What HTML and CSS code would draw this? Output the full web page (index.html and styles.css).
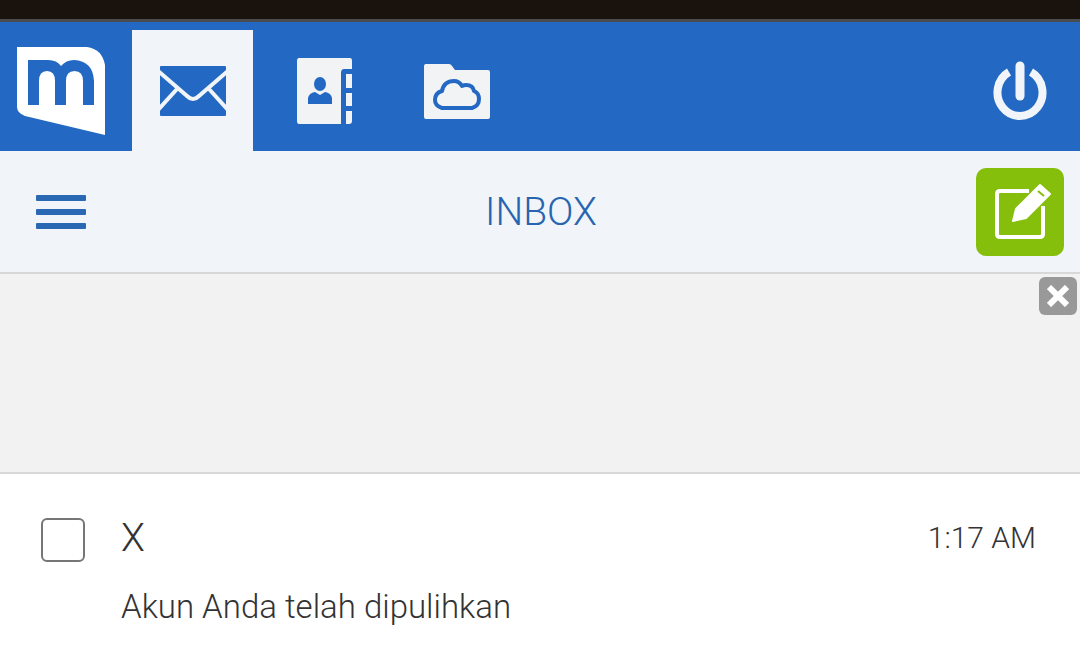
FILE: index.html
```html
<!DOCTYPE html>
<html lang="id">
<head>
<meta charset="utf-8">
<meta name="viewport" content="width=device-width, initial-scale=1">
<title>Inbox</title>
<link rel="stylesheet" href="styles.css">
</head>
<body>
<div class="system-bar"></div>
<header class="app-header">
  <a class="logo" href="#" aria-label="Home">
    <svg width="88" height="88" viewBox="0 0 88 88" aria-hidden="true">
      <path fill="#fff" d="M0 0H70Q85 2 88 18V88L8 69Q0 66 0 60Z"/>
      <path fill="#2369c3" d="M11 13H31Q40 13 44 19Q49 13 57 13Q76 14 77 34V58H66V34Q66 24 57.500 24Q49 24 49 34V58H38V34Q38 24 30 24Q22 24 22 34V58H11Z"/>
    </svg>
  </a>
  <nav class="tabs" aria-label="Sections">
    <a class="tab tab-active" href="#" aria-label="Mail" aria-current="page">
      <svg width="66" height="66" viewBox="0 0 66 66" aria-hidden="true">
        <rect y="8" width="66" height="50" rx="1" fill="#2369c3"/>
        <path d="M-2 13L27 38Q33 44 39 38L68 13M17 31L-2 52M49 31L68 52" fill="none" stroke="#f1f5fa" stroke-width="4"/>
      </svg>
    </a>
    <a class="tab" href="#" aria-label="Contacts">
      <svg width="66" height="66" viewBox="0 0 66 66" aria-hidden="true">
        <path fill="#f2f3f5" d="M7 0H58Q60 0 60 3V11H52Q49 11 49 15V66H7Q5 66 5 63V3Q5 0 7 0Z"/>
        <path fill="#f2f3f5" d="M54 16H60V30H54ZM54 35H60V48H54ZM54 53H60V63Q60 66 57 66H54Z"/>
        <ellipse cx="28" cy="26" rx="6" ry="7" fill="#2369c3"/>
        <path fill="#2369c3" d="M16 46V40Q17 35 23 34L28 37L33 34Q39 35 40 40V46Z"/>
      </svg>
    </a>
    <a class="tab" href="#" aria-label="Files">
      <svg width="66" height="66" viewBox="0 0 66 66" aria-hidden="true">
        <path fill="#f2f3f5" d="M0 8Q0 6 2 6H25Q27 6 28 8L31 12H64Q66 12 66 14V59Q66 61 64 61H2Q0 61 0 59Z"/>
        <path fill="none" stroke="#2369c3" stroke-width="4" stroke-linejoin="round" d="M18 50H48Q55 48 55 41Q55 35 50 33Q49 27 42 27Q40 27 38 28Q35 23 30 23Q20 23 18 33Q11 35 11 42Q11 48 18 50Z"/>
      </svg>
    </a>
  </nav>
  <button class="power" type="button" aria-label="Log out">
    <svg width="66" height="66" viewBox="0 0 66 66" fill="none" stroke="#f1f5fa" stroke-linecap="round" aria-hidden="true">
      <path stroke-width="9" d="M33 8V38"/>
      <path stroke-width="8" stroke-linecap="butt" d="M22 14A22.500 23.500 0 1 0 44 14"/>
    </svg>
  </button>
</header>
<div class="toolbar">
  <button class="menu" type="button" aria-label="Menu">
    <svg width="50" height="34" viewBox="0 0 50 34" fill="#2b68b3" aria-hidden="true">
      <rect width="50" height="6" rx="1"/><rect y="14" width="50" height="6" rx="1"/><rect y="28" width="50" height="6" rx="1"/>
    </svg>
  </button>
  <h1 class="title">INBOX</h1>
  <button class="compose" type="button" aria-label="Compose">
    <svg width="88" height="88" viewBox="0 0 88 88" aria-hidden="true">
      <path fill="none" stroke="#fff" stroke-width="4" stroke-linejoin="round" d="M53 23H24Q21 23 21 26V66Q21 69 24 69H64Q67 69 67 66V38"/>
      <path fill="#fff" stroke="#fff" stroke-width="2" stroke-linejoin="round" d="M37 53L40 41L64 17L74 26L50 50Z"/>
      <path stroke="#86be0c" stroke-width="2" d="M62 23L68 28"/>
    </svg>
  </button>
</div>
<aside class="banner">
  <button class="close" type="button" aria-label="Close">
    <svg width="22" height="22" viewBox="0 0 22 22" aria-hidden="true">
      <path stroke="#fff" stroke-width="6" d="M2 2L20 20M20 2L2 20"/>
    </svg>
  </button>
</aside>
<main class="messages">
  <article class="message">
    <input class="check" type="checkbox" id="message-1" aria-label="X">
    <label class="content" for="message-1">
      <span class="meta"><span class="sender">X</span><time class="time">1:17 AM</time></span>
      <span class="subject">Akun Anda telah dipulihkan</span>
    </label>
  </article>
</main>
</body>
</html>
```
FILE: styles.css
```css
* {
  box-sizing: border-box;
}

body {
  margin: 0;
  background: #fff;
  color: #333;
  font-family: Roboto, "Liberation Sans", sans-serif;
  font-weight: 300;
}

button {
  display: flex;
  align-items: center;
  justify-content: center;
  padding: 0;
  border: 0;
  background: none;
}

svg {
  display: block;
}

.system-bar {
  height: 22px;
  background: #1a120d;
  border-bottom: 3px solid #4b4c50;
}

.app-header {
  display: flex;
  align-items: flex-end;
  padding: 8px 27px 0 17px;
  background: #2369c3;
}

.logo {
  padding-bottom: 16px;
}

.tabs {
  display: flex;
  flex: 1;
  gap: 11px;
  margin-left: 27px;
}

.tab {
  display: flex;
  align-items: center;
  justify-content: center;
  width: 121px;
  height: 121px;
}

.tab-active {
  background: #f1f5fa;
}

.power {
  height: 121px;
}

.toolbar {
  display: grid;
  grid-template-columns: 90px 1fr 88px;
  align-items: center;
  padding: 17px 16px 16px;
  background: #f1f5fa;
  border-bottom: 2px solid #d8d8d8;
}

.menu {
  height: 88px;
}

.title {
  margin: 0;
  color: #2765b0;
  font-size: 39px;
  font-weight: 300;
  line-height: 48px;
  text-align: center;
}

.compose {
  border-radius: 10px;
  background: #86be0c;
}

.banner {
  display: flex;
  justify-content: flex-end;
  align-items: flex-start;
  min-height: 200px;
  padding: 3px;
  background: #f2f2f2;
  border-bottom: 2px solid #d8d8d8;
}

.close {
  width: 38px;
  height: 38px;
  border-radius: 6px;
  background: #999;
}

.message {
  display: flex;
  align-items: flex-start;
  gap: 36px;
  padding: 38px 44px 38px 41px;
}

.check {
  appearance: none;
  width: 44px;
  height: 44px;
  margin: 6px 0 0;
  border: 2px solid #767676;
  border-radius: 6px;
  background: #fff;
}

.check:checked {
  background: #2369c3;
}

.content {
  display: grid;
  flex: 1;
  gap: 23px;
}

.meta {
  display: flex;
  justify-content: space-between;
}

.sender {
  font-size: 39px;
  line-height: 52px;
}

.time {
  font-size: 30px;
  line-height: 52px;
}

.subject {
  font-size: 33px;
  line-height: 40px;
}
```
